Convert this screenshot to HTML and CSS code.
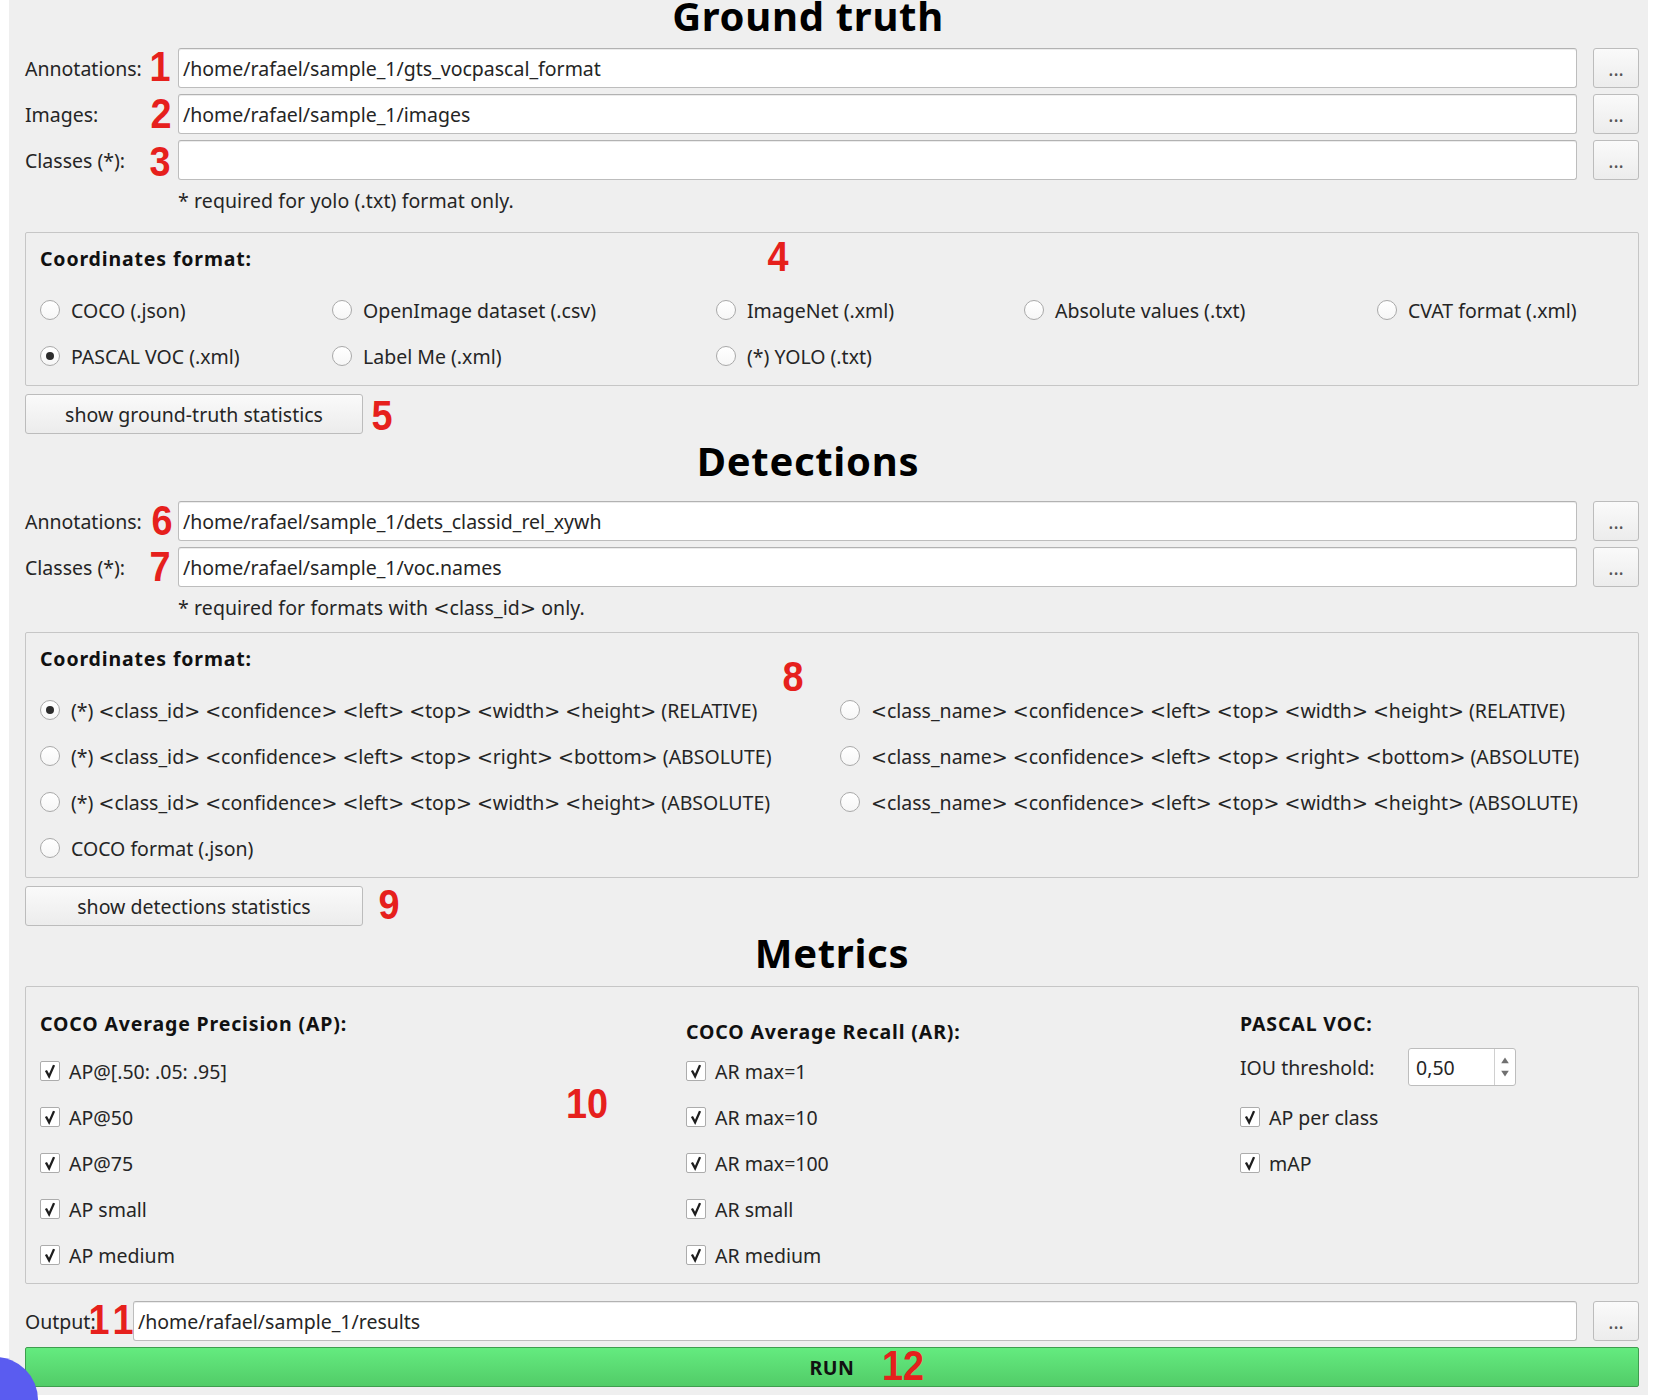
FILE: index.html
```html
<!DOCTYPE html>
<html>
<head>
<meta charset="utf-8">
<link rel="stylesheet" href="styles.css">
</head>
<body>
<div class="window">
  <h1 class="title title-gt">Ground truth</h1>
  <div class="rows">
    <div class="path-row"><span class="lbl">Annotations:</span><div class="field">/home/rafael/sample_1/gts_vocpascal_format</div><div class="browse">...</div></div>
    <div class="path-row"><span class="lbl">Images:</span><div class="field">/home/rafael/sample_1/images</div><div class="browse">...</div></div>
    <div class="path-row"><span class="lbl">Classes (*):</span><div class="field"></div><div class="browse">...</div></div>
  </div>
  <div class="note note-gt">* required for yolo (.txt) format only.</div>
  <div class="group group-gt">
    <div class="group-title">Coordinates format:</div>
    <div class="radio-grid grid-gt">
      <div class="opt"><span class="radio"></span>COCO (.json)</div>
      <div class="opt"><span class="radio"></span>OpenImage dataset (.csv)</div>
      <div class="opt"><span class="radio"></span>ImageNet (.xml)</div>
      <div class="opt"><span class="radio"></span>Absolute values (.txt)</div>
      <div class="opt"><span class="radio"></span>CVAT format (.xml)</div>
      <div class="opt"><span class="radio on"></span>PASCAL VOC (.xml)</div>
      <div class="opt"><span class="radio"></span>Label Me (.xml)</div>
      <div class="opt"><span class="radio"></span>(*) YOLO (.txt)</div>
    </div>
  </div>
  <div class="btn btn-stats">show ground-truth statistics</div>

  <h1 class="title title-det">Detections</h1>
  <div class="rows">
    <div class="path-row"><span class="lbl">Annotations:</span><div class="field">/home/rafael/sample_1/dets_classid_rel_xywh</div><div class="browse">...</div></div>
    <div class="path-row"><span class="lbl">Classes (*):</span><div class="field">/home/rafael/sample_1/voc.names</div><div class="browse">...</div></div>
  </div>
  <div class="note note-det">* required for formats with <span class="p">&lt;</span>class_id<span class="p">&gt;</span> only.</div>
  <div class="group group-det">
    <div class="group-title">Coordinates format:</div>
    <div class="radio-grid grid-det">
      <div class="opt"><span class="radio on"></span><span>(*) <span class="p">&lt;</span>class_id<span class="p">&gt;</span> <span class="p">&lt;</span>confidence<span class="p">&gt;</span> <span class="p">&lt;</span>left<span class="p">&gt;</span> <span class="p">&lt;</span>top<span class="p">&gt;</span> <span class="p">&lt;</span>width<span class="p">&gt;</span> <span class="p">&lt;</span>height<span class="p">&gt;</span> (RELATIVE)</span></div>
      <div class="opt"><span class="radio"></span><span><span class="p">&lt;</span>class_name<span class="p">&gt;</span> <span class="p">&lt;</span>confidence<span class="p">&gt;</span> <span class="p">&lt;</span>left<span class="p">&gt;</span> <span class="p">&lt;</span>top<span class="p">&gt;</span> <span class="p">&lt;</span>width<span class="p">&gt;</span> <span class="p">&lt;</span>height<span class="p">&gt;</span> (RELATIVE)</span></div>
      <div class="opt"><span class="radio"></span><span>(*) <span class="p">&lt;</span>class_id<span class="p">&gt;</span> <span class="p">&lt;</span>confidence<span class="p">&gt;</span> <span class="p">&lt;</span>left<span class="p">&gt;</span> <span class="p">&lt;</span>top<span class="p">&gt;</span> <span class="p">&lt;</span>right<span class="p">&gt;</span> <span class="p">&lt;</span>bottom<span class="p">&gt;</span> (ABSOLUTE)</span></div>
      <div class="opt"><span class="radio"></span><span><span class="p">&lt;</span>class_name<span class="p">&gt;</span> <span class="p">&lt;</span>confidence<span class="p">&gt;</span> <span class="p">&lt;</span>left<span class="p">&gt;</span> <span class="p">&lt;</span>top<span class="p">&gt;</span> <span class="p">&lt;</span>right<span class="p">&gt;</span> <span class="p">&lt;</span>bottom<span class="p">&gt;</span> (ABSOLUTE)</span></div>
      <div class="opt"><span class="radio"></span><span>(*) <span class="p">&lt;</span>class_id<span class="p">&gt;</span> <span class="p">&lt;</span>confidence<span class="p">&gt;</span> <span class="p">&lt;</span>left<span class="p">&gt;</span> <span class="p">&lt;</span>top<span class="p">&gt;</span> <span class="p">&lt;</span>width<span class="p">&gt;</span> <span class="p">&lt;</span>height<span class="p">&gt;</span> (ABSOLUTE)</span></div>
      <div class="opt"><span class="radio"></span><span><span class="p">&lt;</span>class_name<span class="p">&gt;</span> <span class="p">&lt;</span>confidence<span class="p">&gt;</span> <span class="p">&lt;</span>left<span class="p">&gt;</span> <span class="p">&lt;</span>top<span class="p">&gt;</span> <span class="p">&lt;</span>width<span class="p">&gt;</span> <span class="p">&lt;</span>height<span class="p">&gt;</span> (ABSOLUTE)</span></div>
      <div class="opt"><span class="radio"></span>COCO format (.json)</div>
    </div>
  </div>
  <div class="btn btn-stats">show detections statistics</div>

  <h1 class="title title-met">Metrics</h1>
  <div class="group group-met">
    <div class="mcol mcol-ap">
      <div class="group-title">COCO Average Precision (AP):</div>
      <div class="checks">
        <div class="copt"><span class="check"><svg viewBox="0 0 20 20"><polyline points="5.5,9.5 9,16 14.5,3.5"/></svg></span>AP@[.50: .05: .95]</div>
        <div class="copt"><span class="check"><svg viewBox="0 0 20 20"><polyline points="5.5,9.5 9,16 14.5,3.5"/></svg></span>AP@50</div>
        <div class="copt"><span class="check"><svg viewBox="0 0 20 20"><polyline points="5.5,9.5 9,16 14.5,3.5"/></svg></span>AP@75</div>
        <div class="copt"><span class="check"><svg viewBox="0 0 20 20"><polyline points="5.5,9.5 9,16 14.5,3.5"/></svg></span>AP small</div>
        <div class="copt"><span class="check"><svg viewBox="0 0 20 20"><polyline points="5.5,9.5 9,16 14.5,3.5"/></svg></span>AP medium</div>
      </div>
    </div>
    <div class="mcol mcol-ar">
      <div class="group-title">COCO Average Recall (AR):</div>
      <div class="checks">
        <div class="copt"><span class="check"><svg viewBox="0 0 20 20"><polyline points="5.5,9.5 9,16 14.5,3.5"/></svg></span>AR max=1</div>
        <div class="copt"><span class="check"><svg viewBox="0 0 20 20"><polyline points="5.5,9.5 9,16 14.5,3.5"/></svg></span>AR max=10</div>
        <div class="copt"><span class="check"><svg viewBox="0 0 20 20"><polyline points="5.5,9.5 9,16 14.5,3.5"/></svg></span>AR max=100</div>
        <div class="copt"><span class="check"><svg viewBox="0 0 20 20"><polyline points="5.5,9.5 9,16 14.5,3.5"/></svg></span>AR small</div>
        <div class="copt"><span class="check"><svg viewBox="0 0 20 20"><polyline points="5.5,9.5 9,16 14.5,3.5"/></svg></span>AR medium</div>
      </div>
    </div>
    <div class="mcol mcol-voc">
      <div class="group-title">PASCAL VOC:</div>
      <div class="iou-row">
        <span class="iou-lbl">IOU threshold:</span>
        <div class="spin">
          <span class="spin-val">0,50</span>
          <span class="spin-arrows">
            <svg viewBox="0 0 21 36"><polygon class="arr" points="6.5,14 10.5,8 14.5,14"/><polygon class="arr" points="6.5,22 10.5,28 14.5,22"/></svg>
          </span>
        </div>
      </div>
      <div class="checks">
        <div class="copt"><span class="check"><svg viewBox="0 0 20 20"><polyline points="5.5,9.5 9,16 14.5,3.5"/></svg></span>AP per class</div>
        <div class="copt"><span class="check"><svg viewBox="0 0 20 20"><polyline points="5.5,9.5 9,16 14.5,3.5"/></svg></span>mAP</div>
      </div>
    </div>
  </div>

  <div class="path-row out-row"><span class="lbl lbl-out">Output:</span><div class="field">/home/rafael/sample_1/results</div><div class="browse">...</div></div>
  <div class="run">RUN</div>

  <span class="mark m1">1</span>
  <span class="mark m2">2</span>
  <span class="mark m3">3</span>
  <span class="mark m4">4</span>
  <span class="mark m5">5</span>
  <span class="mark m6">6</span>
  <span class="mark m7">7</span>
  <span class="mark m8">8</span>
  <span class="mark m9">9</span>
  <span class="mark m10">10</span>
  <span class="mark m11">1</span>
  <span class="mark m11b">1</span>
  <span class="mark m12">12</span>
</div>
<div class="bubble"></div>
</body>
</html>
```

FILE: styles.css
```css
* { box-sizing: border-box; }
html, body { margin: 0; padding: 0; background: #ffffff; }
body {
  font-family: "Noto Sans", "DejaVu Sans", sans-serif;
  font-size: 19.5px;
  color: #252525;
  position: relative;
  height: 1400px;
  overflow: hidden;
}
.p { font-family: "DejaVu Sans", sans-serif; font-size: 19px; }
.window {
  position: relative;
  margin-left: 9px;
  width: 1639px;
  height: 1395px;
  background: #efefef;
  padding: 0 9px 0 16px;
  overflow: hidden;
}
.title {
  margin: 0;
  font-size: 40px;
  line-height: 40px;
  font-weight: 700;
  letter-spacing: 0.7px;
  color: #000;
  text-align: center;
}
.title-gt { margin: -4px 0 12px; padding-right: 48px; }
.title-det { margin: 7px 0 20px; padding-right: 48px; }
.title-met { margin: 7px 0 13px; }

.rows { display: flex; flex-direction: column; gap: 6px; }
.path-row { display: flex; align-items: center; height: 40px; }
.lbl { width: 153px; flex: none; white-space: nowrap; }
.lbl-out { width: 108px; }
.field {
  flex: 1;
  height: 40px;
  background: #fff;
  border: 1px solid #bdbdbd;
  border-top-color: #b2b2b2;
  border-radius: 3px;
  padding: 0 4px;
  display: flex;
  align-items: center;
  white-space: nowrap;
  box-shadow: inset 0 1px 0 #ececec;
}
.browse, .btn {
  background: linear-gradient(#fafafa, #ececec);
  border: 1px solid #bcbcbc;
  border-radius: 3px;
  display: flex;
  align-items: center;
  justify-content: center;
  white-space: nowrap;
}
.browse { width: 46px; height: 40px; margin-left: 16px; flex: none; color: #555; }
.note { margin: 8px 0 0 153px; line-height: 26px; letter-spacing: 0.1px; }

.group { border: 1px solid #c6c6c6; border-radius: 2px; }
.group-gt { margin-top: 18px; padding: 13px 14px 6px; }
.group-det { margin-top: 11px; padding: 13px 14px 6px; }
.group-title { font-weight: 700; line-height: 26px; color: #111; white-space: nowrap; letter-spacing: 0.85px; }
.radio-grid { margin-top: 15px; display: grid; grid-auto-rows: 46px; }
.grid-gt { grid-template-columns: 292px 384px 308px 353px 1fr; }
.grid-det { grid-template-columns: 800px 1fr; }
.opt { display: flex; align-items: center; gap: 11px; white-space: nowrap; }
.radio {
  width: 20px; height: 20px; flex: none;
  border-radius: 50%;
  border: 1px solid #a9a9a9;
  background: linear-gradient(#ffffff, #f6f6f6);
  display: flex; align-items: center; justify-content: center;
}
.radio.on::after {
  content: "";
  width: 8px; height: 8px; border-radius: 50%;
  background: #2c2c2c;
}
.btn-stats { margin-top: 8px; width: 338px; height: 40px; }

.group-met {
  display: grid;
  grid-template-columns: 646px 554px 1fr;
  padding: 24px 14px 5px;
}
.mcol { display: flex; flex-direction: column; }
.mcol-ap .checks { margin-top: 11px; }
.mcol-ar { padding-top: 8px; }
.mcol-ar .checks { margin-top: 3px; }
.checks { display: flex; flex-direction: column; }
.copt { height: 46px; display: flex; align-items: center; gap: 9px; white-space: nowrap; }
.check {
  width: 20px; height: 20px; flex: none;
  border: 1px solid #acacac;
  border-radius: 2px;
  background: #fff;
  display: flex;
}
.check svg { width: 18px; height: 18px; }
.check polyline { fill: none; stroke: #1e1e1e; stroke-width: 2.6; stroke-linejoin: miter; }
.iou-row { margin-top: 11px; height: 38px; display: flex; align-items: center; }
.iou-lbl { width: 168px; flex: none; }
.mcol-voc .checks { margin-top: 8px; }
.spin {
  width: 108px; height: 38px;
  background: #fff;
  border: 1px solid #bdbdbd;
  border-radius: 3px;
  display: flex;
  align-items: center;
}
.spin-val { flex: 1; padding-left: 7px; }
.spin-arrows {
  width: 21px; height: 36px; flex: none;
  border-left: 1px solid #d0d0d0;
  display: flex;
}
.spin-arrows svg { width: 20px; height: 36px; }
.arr { fill: #707070; }

.out-row { margin-top: 17px; }
.run {
  margin-top: 6px;
  height: 40px;
  background: linear-gradient(#64eb7f, #52cc68);
  border: 1px solid #3e9e4e;
  border-radius: 2px;
  display: flex; align-items: center; justify-content: center;
  font-weight: 700;
  letter-spacing: 0.5px;
  color: #111;
}

.mark {
  position: absolute;
  font-family: "Liberation Sans", Arial, sans-serif;
  font-size: 42px;
  font-weight: 700;
  line-height: 1;
  color: #e6201c;
  transform: translate(-50%, -50%) scaleX(0.9);
}
.m1 { left: 151px; top: 67px; }
.m2 { left: 152px; top: 114px; }
.m3 { left: 151px; top: 162px; }
.m4 { left: 769px; top: 257px; }
.m5 { left: 373px; top: 416px; }
.m6 { left: 153px; top: 521px; }
.m7 { left: 151px; top: 567px; }
.m8 { left: 784px; top: 677px; }
.m9 { left: 380px; top: 905px; }
.m10 { left: 578px; top: 1104px; }
.m11 { left: 90px; top: 1320px; }
.m11b { left: 114px; top: 1320px; }
.m12 { left: 894px; top: 1366px; }

.bubble {
  position: absolute;
  left: -48px;
  top: 1357px;
  width: 86px;
  height: 86px;
  border-radius: 50%;
  background: #5a5cf0;
}
```
